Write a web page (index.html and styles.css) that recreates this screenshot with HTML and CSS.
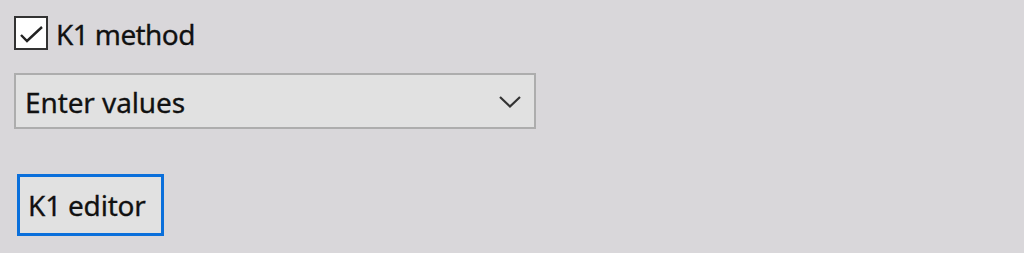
FILE: index.html
```html
<!DOCTYPE html>
<html>
<head>
<meta charset="utf-8">
<link rel="stylesheet" href="styles.css">
</head>
<body>
<div class="panel">
  <label class="check-row">
    <span class="checkbox">
      <svg width="30" height="30" viewBox="0 0 30 30"><path d="M5 17 L11 23 L26 9" fill="none" stroke="#222" stroke-width="2.4"/></svg>
    </span>
    <span class="check-label">K1 method</span>
  </label>
  <div class="select">
    <span class="select-text">Enter values</span>
    <svg class="chevron" width="24" height="14" viewBox="0 0 24 14"><path d="M2 2 L12 11.5 L22 2" fill="none" stroke="#333" stroke-width="2.2"/></svg>
  </div>
  <div class="button">K1 editor</div>
</div>
</body>
</html>
```
FILE: styles.css
```css
html, body {
  margin: 0;
  padding: 0;
  background: #d9d7da;
}
body {
  width: 1024px;
  height: 253px;
  overflow: hidden;
  font-family: "Noto Sans", "Liberation Sans", sans-serif;
  font-size: 28px;
  color: #111;
  -webkit-text-stroke: 0.3px #111;
}
.panel {
  padding: 16px 0 0 14px;
  display: flex;
  flex-direction: column;
  align-items: flex-start;
}
.check-row {
  display: flex;
  align-items: center;
  height: 34px;
}
.checkbox {
  width: 30px;
  height: 30px;
  border: 2px solid #333;
  background: #fff;
  display: flex;
}
.check-label {
  margin-left: 8px;
  padding-top: 2px;
  line-height: 34px;
  letter-spacing: -0.6px;
}
.select {
  margin-top: 23px;
  width: 518px;
  height: 52px;
  border: 2px solid #adadad;
  background: #e1e1e1;
  display: flex;
  align-items: center;
  justify-content: space-between;
  box-sizing: content-box;
}
.select-text {
  padding-left: 9px;
  padding-top: 2px;
  letter-spacing: -0.1px;
}
.chevron {
  margin-right: 12px;
  margin-top: 2px;
}
.button {
  margin-top: 45px;
  margin-left: 3px;
  width: 133px;
  height: 56px;
  padding-left: 8px;
  border: 3px solid #0a6fdb;
  background: #e1e1e1;
  display: flex;
  align-items: center;
  box-sizing: content-box;
  letter-spacing: -0.2px;
}
```
